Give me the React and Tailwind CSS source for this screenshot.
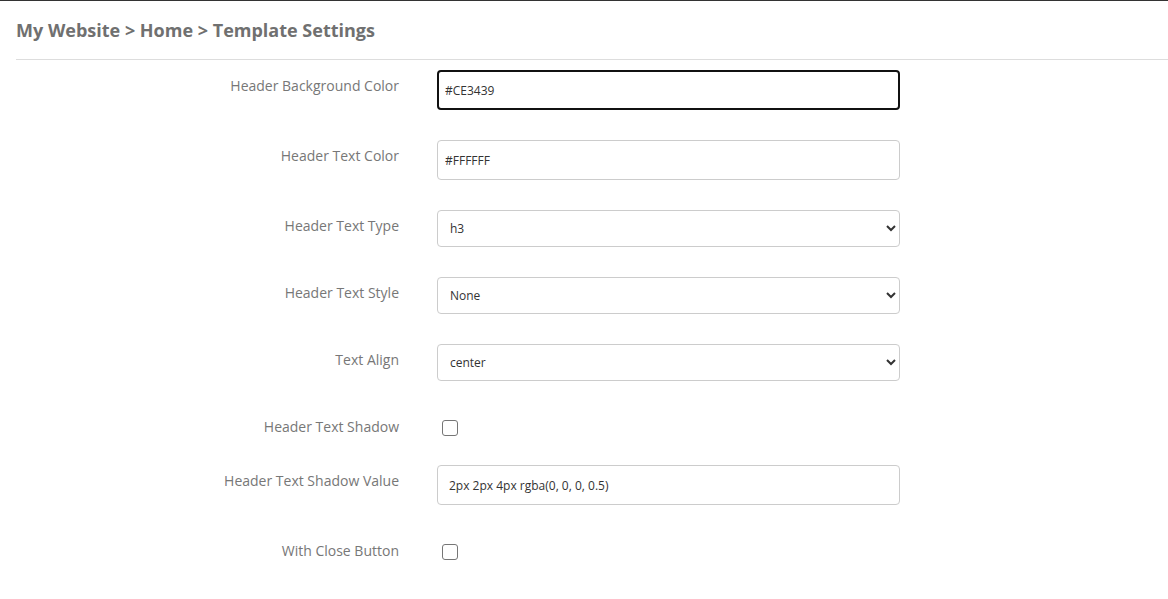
const fields = [
  { label: "Header Background Color", type: "text", value: "#CE3439", focus: true },
  { label: "Header Text Color", type: "text", value: "#FFFFFF" },
  { label: "Header Text Type", type: "select", value: "h3", options: ["h1", "h2", "h3", "h4", "h5", "h6"] },
  { label: "Header Text Style", type: "select", value: "None", options: ["None", "Bold", "Italic"] },
  { label: "Text Align", type: "select", value: "center", options: ["left", "center", "right"] },
  { label: "Header Text Shadow", type: "checkbox" },
  { label: "Header Text Shadow Value", type: "text", value: "2px 2px 4px rgba(0, 0, 0, 0.5)", wide: true },
  { label: "With Close Button", type: "checkbox" },
];

const Field = ({ field }) => {
  if (field.type === "select") {
    return (
      <select
        defaultValue={field.value}
        className="w-[463px] h-[37px] pl-[8px] pr-2 text-[12px] text-[#333] bg-white border border-[#ccc] rounded-[4px] outline-none"
      >
        {field.options.map((o) => (
          <option key={o}>{o}</option>
        ))}
      </select>
    );
  }
  if (field.type === "checkbox") {
    return (
      <div className="h-[24px] pl-[5px] pt-[9px]">
        <span className="block w-[16px] h-[16px] border border-[#767676] rounded-[3px] bg-white" />
      </div>
    );
  }
  return (
    <input
      type="text"
      defaultValue={field.value}
      className={`w-[463px] h-[40px] pr-[8px] text-[12px] text-[#333] bg-white rounded-[4px] outline-none ${
        field.focus
          ? "border-2 border-[#111] pl-[6px]"
          : field.wide
          ? "border border-[#ccc] pl-[11px]"
          : "border border-[#ccc] pl-[7px]"
      }`}
    />
  );
};

export default function App() {
  return (
    <div className="min-h-screen bg-white border-t border-[#333] font-['Open_Sans',sans-serif]">
      <div className="pl-[16px]">
        <h1 className="h-[58px] pt-[16px] text-[18px] leading-[26px] font-bold text-[#707070]">
          My Website &gt; Home &gt; Template Settings
        </h1>
        <div className="border-t border-[#ddd]" />
        <div className="pt-[10px] flex flex-col gap-[30px]">
          {fields.map((field) => (
            <div key={field.label} className="flex items-start">
              <label className="w-[383px] h-[24px] pt-[6px] text-right text-[14px] leading-[20px] text-[#777]">
                {field.label}
              </label>
              <div className="ml-[38px]">
                <Field field={field} />
              </div>
            </div>
          ))}
        </div>
      </div>
    </div>
  );
}
